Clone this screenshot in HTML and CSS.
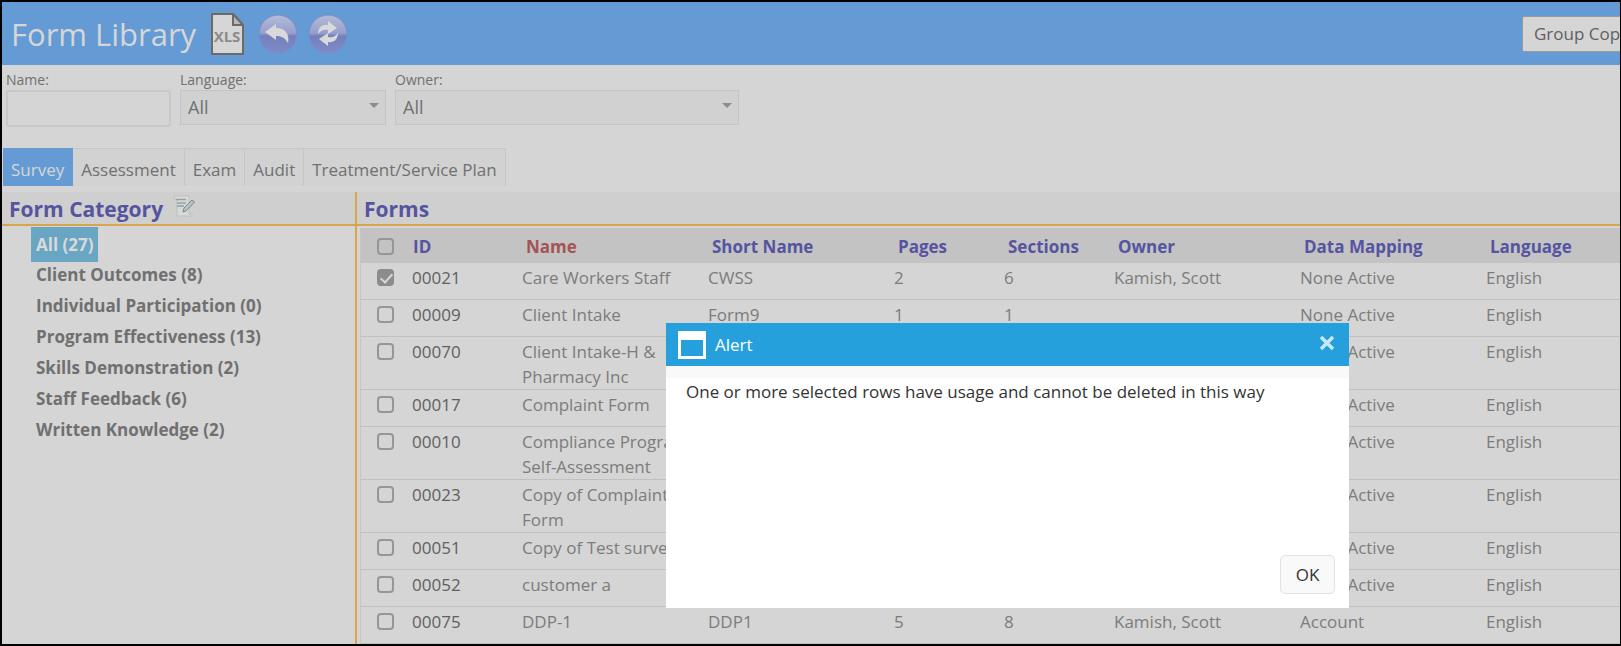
FILE: index.html
```html
<!DOCTYPE html>
<html lang="en">
<head>
  <meta charset="UTF-8">
  <meta name="viewport" content="width=device-width, initial-scale=1.0">
  <title>Form Library</title>
  <link rel="stylesheet" href="styles.css">
</head>
<body>
  <div class="page">
    <header class="top-bar">
      <h1>Form Library</h1>
      <button class="icon-btn" aria-label="Export to XLS">
        <svg width="33" height="42" viewBox="0 0 33 42">
          <path d="M1 1H22L32 12V41H1Z" fill="#d6d6d6" stroke="#6b6b6b" stroke-width="2"/>
          <path d="M22 1V12H32Z" fill="#b9b9b9" stroke="#6b6b6b" stroke-width="2"/>
          <text x="16" y="29" text-anchor="middle" class="xls-text">XLS</text>
        </svg>
      </button>
      <button class="icon-btn" aria-label="Back">
        <svg width="40" height="40" viewBox="0 0 40 40">
          <defs>
            <linearGradient id="ball" x1="0" y1="0" x2="0" y2="1">
              <stop offset="0" stop-color="#b4bbd8"/>
              <stop offset="0.48" stop-color="#969fcd"/>
              <stop offset="0.55" stop-color="#7480bd"/>
              <stop offset="1" stop-color="#7f8bc6"/>
            </linearGradient>
          </defs>
          <circle cx="20" cy="20" r="19" fill="url(#ball)" stroke="#7a8cc6"/>
          <path d="M7 18L18 10V14C27 14 32 20 30 29C27 24 24 22 18 22V26Z" fill="#d9d9dc"/>
        </svg>
      </button>
      <button class="icon-btn" aria-label="Refresh">
        <svg width="40" height="40" viewBox="0 0 40 40">
          <circle cx="20" cy="20" r="19" fill="url(#ball)" stroke="#7a8cc6"/>
          <path d="M10 20C10 13 15 10 20 11V7L29 14L20 20V16C16 15 13 16 10 20Z" fill="#d9d9dc"/>
          <path d="M30 19C30 26 25 29 20 28V32L11 25L20 19V23C24 24 27 23 30 19Z" fill="#d9d9dc"/>
        </svg>
      </button>
      <div class="actions">
        <button class="action-btn">Group Copy</button>
      </div>
    </header>

    <form class="filters">
      <div class="field name-field">
        <label for="nameFilter">Name:</label>
        <input type="text" id="nameFilter">
      </div>
      <div class="field language-field">
        <label for="languageFilter">Language:</label>
        <div class="select-box">
          <select id="languageFilter"><option>All</option></select>
        </div>
      </div>
      <div class="field owner-field">
        <label for="ownerFilter">Owner:</label>
        <div class="select-box">
          <select id="ownerFilter"><option>All</option></select>
        </div>
      </div>
    </form>

    <nav class="tabs">
      <a href="#survey" class="active">Survey</a>
      <a href="#assessment">Assessment</a>
      <a href="#exam">Exam</a>
      <a href="#audit">Audit</a>
      <a href="#plan">Treatment/Service Plan</a>
    </nav>

    <div class="content">
      <aside class="categories">
        <h2>Form Category
          <button class="edit-btn" aria-label="Edit categories">
            <svg width="22" height="22" viewBox="0 0 22 22">
              <path d="M1 1H16V19H19V21H4V4H1Z" fill="#d9dad8" stroke="#bfc1bd"/>
              <path d="M3 4.500H13M4 8H13M4 11H11" stroke="#8fa3ab" stroke-width="1.500"/>
              <path d="M10 17L11 13L19 5L21.500 7L13 16Z" fill="#b8c4c6" stroke="#75868c"/>
            </svg>
          </button>
        </h2>
        <ul>
          <li class="selected"><a href="#all">All (27)</a></li>
          <li><a href="#outcomes">Client Outcomes (8)</a></li>
          <li><a href="#participation">Individual Participation (0)</a></li>
          <li><a href="#effectiveness">Program Effectiveness (13)</a></li>
          <li><a href="#skills">Skills Demonstration (2)</a></li>
          <li><a href="#feedback">Staff Feedback (6)</a></li>
          <li><a href="#knowledge">Written Knowledge (2)</a></li>
        </ul>
      </aside>

      <main class="forms">
        <h2>Forms</h2>
        <table>
          <colgroup>
            <col class="col-check">
            <col class="col-small">
            <col class="col-wide">
            <col class="col-wide">
            <col class="col-small">
            <col class="col-small">
            <col class="col-wide">
            <col class="col-wide">
            <col>
          </colgroup>
          <thead>
            <tr>
              <th><input type="checkbox" aria-label="Select all"></th>
              <th>ID</th>
              <th class="sorted">Name</th>
              <th>Short Name</th>
              <th>Pages</th>
              <th>Sections</th>
              <th>Owner</th>
              <th>Data Mapping</th>
              <th>Language</th>
            </tr>
          </thead>
          <tbody>
            <tr><td><input type="checkbox" aria-label="Select 00021" checked></td><td>00021</td><td>Care Workers Staff</td><td>CWSS</td><td>2</td><td>6</td><td>Kamish, Scott</td><td>None Active</td><td>English</td></tr>
            <tr><td><input type="checkbox" aria-label="Select 00009"></td><td>00009</td><td>Client Intake</td><td>Form9</td><td>1</td><td>1</td><td></td><td>None Active</td><td>English</td></tr>
            <tr><td><input type="checkbox" aria-label="Select 00070"></td><td>00070</td><td>Client Intake-H &amp;<br>Pharmacy Inc</td><td></td><td></td><td></td><td></td><td>None Active</td><td>English</td></tr>
            <tr><td><input type="checkbox" aria-label="Select 00017"></td><td>00017</td><td>Complaint Form</td><td></td><td></td><td></td><td></td><td>None Active</td><td>English</td></tr>
            <tr><td><input type="checkbox" aria-label="Select 00010"></td><td>00010</td><td>Compliance Program<br>Self-Assessment</td><td></td><td></td><td></td><td></td><td>None Active</td><td>English</td></tr>
            <tr><td><input type="checkbox" aria-label="Select 00023"></td><td>00023</td><td>Copy of Complaint<br>Form</td><td></td><td></td><td></td><td></td><td>None Active</td><td>English</td></tr>
            <tr><td><input type="checkbox" aria-label="Select 00051"></td><td>00051</td><td>Copy of Test survey</td><td></td><td></td><td></td><td></td><td>None Active</td><td>English</td></tr>
            <tr><td><input type="checkbox" aria-label="Select 00052"></td><td>00052</td><td>customer a</td><td></td><td></td><td></td><td></td><td>None Active</td><td>English</td></tr>
            <tr><td><input type="checkbox" aria-label="Select 00075"></td><td>00075</td><td>DDP-1</td><td>DDP1</td><td>5</td><td>8</td><td>Kamish, Scott</td><td>Account</td><td>English</td></tr>
          </tbody>
        </table>
      </main>
    </div>

    <div class="alert" role="dialog" aria-labelledby="alertTitle">
      <div class="alert-header">
        <svg width="28" height="28" viewBox="0 0 28 28">
          <path d="M0 0H28V28H0ZM3 9V25H25V9Z" fill="#fff" fill-rule="evenodd"/>
        </svg>
        <span id="alertTitle">Alert</span>
        <button class="close-btn" aria-label="Close">
          <svg width="16" height="16" viewBox="0 0 16 16">
            <path d="M2 2L14 14M14 2L2 14" stroke="#c9e8f8" stroke-width="3.500"/>
          </svg>
        </button>
      </div>
      <div class="alert-body">
        <p>One or more selected rows have usage and cannot be deleted in this way</p>
        <button class="ok-btn">OK</button>
      </div>
    </div>
  </div>
</body>
</html>
```
FILE: styles.css
```css
* {
  box-sizing: border-box;
}

body {
  margin: 0;
  background: #000;
  font-family: 'Segoe UI', 'Open Sans', sans-serif;
  font-size: 17px;
  line-height: 25px;
  color: #707070;
}

button, input, select {
  font: inherit;
  color: inherit;
}

button {
  cursor: pointer;
}

a {
  color: inherit;
  text-decoration: none;
}

.page {
  position: relative;
  display: flex;
  flex-direction: column;
  height: 100vh;
  border: 2px solid #000;
  border-right-width: 1px;
  background: #d5d5d5;
  overflow: hidden;
}

.top-bar {
  display: flex;
  flex: none;
  align-items: center;
  height: 63px;
  padding-left: 9px;
  background: #649bd5;
}

.top-bar h1 {
  margin: 0 15px 0 0;
  font-size: 31px;
  font-weight: 400;
  line-height: 40px;
  color: #d6d6d6;
  white-space: nowrap;
}

.icon-btn {
  display: flex;
  margin-right: 10px;
  padding: 0;
  border: none;
  background: none;
}

.icon-btn:first-of-type {
  margin-right: 14px;
}

.xls-text {
  font-size: 15px;
  font-weight: 700;
  fill: #8b8b8b;
}

.actions {
  width: 98px;
  margin-left: auto;
}

.action-btn {
  height: 36px;
  padding: 0 11px;
  border: 1px solid #999;
  border-radius: 2px;
  background: #d5d5d5;
  color: #606060;
  white-space: nowrap;
}

.filters {
  display: flex;
  flex: none;
  gap: 9px;
  padding: 5px 4px 0;
  height: 83px;
}

.field {
  display: flex;
  flex-direction: column;
}

.field label {
  font-size: 14px;
  line-height: 20px;
}

.name-field {
  width: 165px;
}

.language-field {
  width: 206px;
}

.owner-field {
  width: 344px;
}

.field input {
  width: 100%;
  height: 37px;
  border: 2px solid #c8c8c8;
  border-radius: 3px;
  background: #d5d5d5;
}

.select-box {
  position: relative;
}

.select-box::after {
  content: "";
  position: absolute;
  top: 13px;
  right: 7px;
  border: 5px solid transparent;
  border-top-color: #8c8c8c;
  border-bottom: none;
  pointer-events: none;
}

.select-box select {
  appearance: none;
  width: 100%;
  height: 35px;
  padding: 0 7px;
  border: 1px solid #c4c4c4;
  border-radius: 0;
  background: #d1d1d1;
  font-size: 18px;
}

.tabs {
  display: flex;
  flex: none;
  height: 44px;
  padding-left: 1px;
}

.tabs a {
  height: 38px;
  padding: 8px 8px 0;
  border: 1px solid #c6c6c6;
  border-width: 1px 1px 0 0;
  background: #d2d2d2;
  white-space: nowrap;
}

.tabs .active {
  border-color: #649bd5;
  background: #649bd5;
  color: #d6d6d6;
}

.content {
  display: flex;
  flex: 1;
  min-height: 0;
}

h2 {
  display: flex;
  align-items: center;
  gap: 10px;
  margin: 0;
  height: 34px;
  padding: 2px 7px 0;
  border-bottom: 2px solid #d7a64b;
  background: #cfcfcf;
  font-size: 21px;
  line-height: 30px;
  color: #5654a0;
}

.edit-btn {
  display: flex;
  padding: 0 0 6px;
  border: none;
  background: none;
}

.categories {
  flex: none;
  width: 355px;
  border-right: 2px solid #d7a64b;
}

.categories ul {
  margin: 1px 0 0;
  padding: 0 0 0 29px;
  list-style: none;
  font-weight: 700;
}

.categories li {
  line-height: 31px;
}

.categories a {
  padding: 0 5px;
}

.categories .selected {
  width: max-content;
  margin-bottom: -3px;
  background: #68a6c4;
  color: #d9d9d9;
  line-height: 35px;
}

.forms {
  flex: 1;
  min-width: 0;
  overflow: hidden;
}

table {
  width: calc(100% - 3px);
  margin: 2px 0 0 3px;
  border-left: 1px solid #c6c6c6;
  border-spacing: 0;
  table-layout: fixed;
}

.col-check {
  width: 43px;
}

.col-small {
  width: 110px;
}

.col-wide {
  width: 186px;
}

th {
  height: 35px;
  padding: 1px 0 0 12px;
  background: #c3c3c3;
  color: #5654a0;
  text-align: left;
}

th.sorted {
  color: #a65356;
}

td {
  height: 37px;
  padding: 2px 0 0 8px;
  border-bottom: 1px solid #c0c0c0;
  color: #7c7c7c;
  vertical-align: top;
  white-space: nowrap;
}

th:first-child, td:first-child {
  padding-left: 16px;
}

td:nth-child(2) {
  color: #606060;
}

th:nth-child(2) {
  padding-left: 9px;
}

table input {
  appearance: none;
  display: block;
  width: 17px;
  height: 17px;
  margin: 0;
  border: 2px solid #969696;
  border-radius: 4px;
}

td input {
  margin-top: 4px;
}

table input:checked {
  position: relative;
  background: #8c8c8c;
  border-color: #8c8c8c;
}

table input:checked::after {
  content: "";
  position: absolute;
  left: 4px;
  top: 0;
  width: 5px;
  height: 10px;
  border: solid #d8d8d8;
  border-width: 0 2px 2px 0;
  transform: rotate(42deg);
}

.alert {
  position: absolute;
  top: 321px;
  left: 664px;
  display: flex;
  flex-direction: column;
  width: 683px;
  height: 285px;
  background: #fff;
  color: #333;
}

.alert-header {
  display: flex;
  align-items: center;
  gap: 9px;
  height: 43px;
  padding: 0 14px 0 12px;
  background: #26a0dc;
  color: #fff;
}

.close-btn {
  display: flex;
  margin-left: auto;
  padding: 0 0 3px;
  border: none;
  background: none;
}

.alert-body {
  display: flex;
  flex: 1;
  flex-direction: column;
  padding: 0 14px 14px 20px;
  border-top: 12px solid #f9f9f9;
}

.alert-body p {
  margin: 1px 0 0;
}

.ok-btn {
  width: 55px;
  height: 39px;
  margin: auto 0 0 auto;
  padding: 0;
  border: 1px solid #e2e2e2;
  border-radius: 5px;
  background: #f9f9f9;
}
```
